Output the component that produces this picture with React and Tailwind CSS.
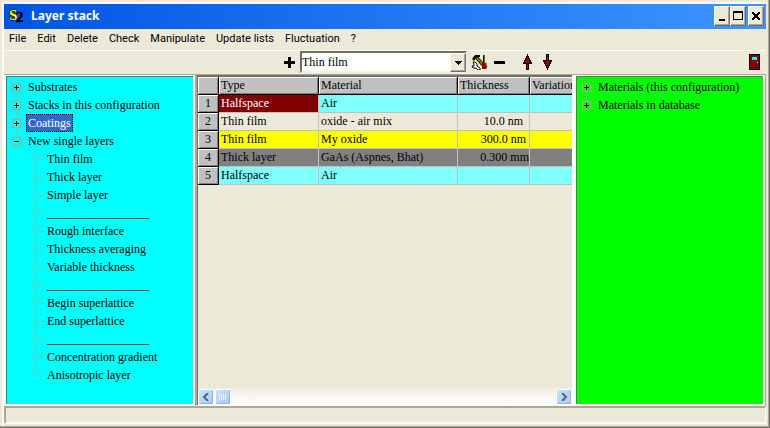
import React, { useState } from "react";

const MENU = [
    "File",
    "Edit",
    "Delete",
    "Check",
    "Manipulate",
    "Update lists",
    "Fluctuation",
    "?",
];

const SEPARATOR = "_________________";

const LAYER_TYPES = [
    "Thin film",
    "Thick layer",
    "Simple layer",
    SEPARATOR,
    "Rough interface",
    "Thickness averaging",
    "Variable thickness",
    SEPARATOR,
    "Begin superlattice",
    "End superlattice",
    SEPARATOR,
    "Concentration gradient",
    "Anisotropic layer",
];

const SOURCES = [
    { label: "Substrates" },
    { label: "Stacks in this configuration" },
    { label: "Coatings" },
    { label: "New single layers", children: LAYER_TYPES },
];

const MATERIALS = [
    { label: "Materials (this configuration)" },
    { label: "Materials in database" },
];

const LAYERS = [
    { type: "Halfspace", material: "Air", thickness: "", color: "bg-[#80ffff]" },
    {
        type: "Thin film",
        material: "oxide - air mix",
        thickness: "10.0 nm",
        color: "bg-[#ece9d8]",
        pad: "pr-[6px]",
    },
    {
        type: "Thin film",
        material: "My oxide",
        thickness: "300.0 nm",
        color: "bg-[#ffff00]",
        pad: "pr-[3px]",
    },
    {
        type: "Thick layer",
        material: "GaAs (Aspnes, Bhat)",
        thickness: "0.300 mm",
        color: "bg-[#808080]",
        pad: "pr-0",
    },
    { type: "Halfspace", material: "Air", thickness: "", color: "bg-[#80ffff]" },
];

function Expander({ open, first, last }) {
    return (
        <svg width="18" height="18" shapeRendering="crispEdges" className="shrink-0">
            <g stroke="#c09c90" strokeDasharray="1 1" fill="none">
                {!first && <path d="M6.5 0V5" />}
                {!last && <path d="M6.5 14V18" />}
                <path d="M11 9.5H15" />
            </g>
            <rect x="2.5" y="5.5" width="8" height="8" fill="none" stroke="#c09c90" />
            <path d="M4 9.5H9" stroke="#000" />
            {!open && <path d="M6.5 7V12" stroke="#000" />}
        </svg>
    );
}

function Branch({ last }) {
    return (
        <svg width="36" height="18" shapeRendering="crispEdges" className="shrink-0">
            <g stroke="#c09c90" strokeDasharray="1 1" fill="none">
                <path d={last ? "M25.5 0V10" : "M25.5 0V18"} />
                <path d="M27 9.5H34" />
            </g>
        </svg>
    );
}

function Tree({ nodes, selected, onSelect }) {
    return (
        <ul className="pt-px pl-[3px]">
            {nodes.map((node, i) => (
                <li key={node.label}>
                    <div className="flex h-[18px]">
                        <Expander
                            open={!!node.children}
                            first={i === 0}
                            last={i === nodes.length - 1}
                        />
                        <button
                            onClick={() => onSelect && onSelect(node.label)}
                            className={
                                selected === node.label
                                    ? "-ml-[2px] border border-dotted border-black bg-[#316ac5] px-px leading-4 text-white"
                                    : "leading-[18px]"
                            }
                        >
                            {node.label}
                        </button>
                    </div>
                    {node.children && (
                        <ul>
                            {node.children.map((child, j) => (
                                <li key={j} className="flex h-[18px] leading-[18px]">
                                    <Branch last={j === node.children.length - 1} />
                                    <button className="ml-px">{child}</button>
                                </li>
                            ))}
                        </ul>
                    )}
                </li>
            ))}
        </ul>
    );
}

function TitleBar() {
    const button =
        "flex h-5 w-4 items-center justify-center border border-t-white border-l-white border-r-[#716f64] border-b-[#716f64] bg-[#ece9d8] shadow-[inset_-1px_-1px_0_#aca899]";
    return (
        <header className="flex h-[25px] items-center bg-linear-to-r from-[#0054e3] to-[#3d95ff] pr-[2px] pb-px pl-[5px]">
            <svg width="16" height="16" viewBox="0 0 16 16" className="mr-[6px]">
                <text
                    x="0"
                    y="12"
                    fontFamily="Liberation Serif, serif"
                    fontWeight="bold"
                    fontSize="15"
                    fill="#ffff00"
                    stroke="#000"
                    strokeWidth="1"
                    paintOrder="stroke"
                >
                    S
                </text>
                <text
                    x="7"
                    y="14"
                    fontFamily="Liberation Serif, serif"
                    fontWeight="bold"
                    fontSize="15"
                    fill="#000"
                    stroke="#000"
                    strokeWidth="0.5"
                >
                    2
                </text>
            </svg>
            <h1 className="flex-1 font-['Noto_Sans',sans-serif] text-[12px] leading-5 font-bold text-white">
                Layer stack
            </h1>
            <button aria-label="Minimize" className={button}>
                <svg width="12" height="12" shapeRendering="crispEdges">
                    <path d="M3 9H9V11H3Z" />
                </svg>
            </button>
            <button aria-label="Maximize" className={button}>
                <svg width="12" height="12" shapeRendering="crispEdges">
                    <path d="M1 1H11V10H1ZM2 3V9H10V3Z" fillRule="evenodd" />
                </svg>
            </button>
            <button aria-label="Close" className={button + " ml-[2px]"}>
                <svg width="12" height="12" shapeRendering="crispEdges">
                    <path d="M2 2H4V3H5V4H7V3H8V2H10V4H9V5H8V7H9V8H10V10H8V9H7V8H5V9H4V10H2V8H3V7H4V5H3V4H2Z" />
                </svg>
            </button>
        </header>
    );
}

function Toolbar() {
    return (
        <div className="flex h-[25px] items-center border-t border-b border-t-white border-b-[#aca899] pr-[6px] pb-px pl-[279px]">
            <button aria-label="Add layer" className="mr-[5px]">
                <svg width="12" height="12" shapeRendering="crispEdges" className="block">
                    <path d="M5 1H8V5H12V8H8V12H5V8H1V5H5Z" />
                </svg>
            </button>
            <div className="relative">
                <select
                    aria-label="Layer type"
                    defaultValue="Thin film"
                    className="block h-[22px] w-[167px] appearance-none border-2 border-t-[#716f64] border-r-[#f4f2e8] border-b-[#f4f2e8] border-l-[#716f64] bg-white text-[12px] leading-4 outline-none"
                >
                    <option>Thin film</option>
                    <option>Thick layer</option>
                    <option>Simple layer</option>
                </select>
                <span className="pointer-events-none absolute top-[2px] right-px flex h-[19px] w-4 items-center justify-center border border-t-white border-r-[#716f64] border-b-[#716f64] border-l-white bg-[#ece9d8] shadow-[inset_-1px_-1px_0_#aca899]">
                    <svg width="7" height="4" shapeRendering="crispEdges">
                        <path d="M0 0H7V1H6V2H5V3H4V4H3V3H2V2H1V1H0Z" />
                    </svg>
                </span>
            </div>
            <button aria-label="Edit layer" className="ml-1">
                <svg width="17" height="16" viewBox="0 0 17 16" className="block">
                    <path d="M5 3L15 14" stroke="#000" strokeWidth="3.4" />
                    <path d="M5 3L15 14" stroke="#808000" strokeWidth="2" />
                    <path d="M1 5L4 1H9V3L7 3L4 5L3 7Z" fill="#000" />
                    <path d="M1 5L3 7" stroke="#808000" strokeWidth="1" />
                    <path d="M2 8L4 8L6 10V12L9 14V16H7L5 14H2L1 12L3 12L3 10Z" fill="#fff" stroke="#000" />
                    <path d="M12 1H14V9H12Z" fill="#606060" />
                    <path d="M12.5 1V9" stroke="#000" strokeWidth="0.8" />
                    <path d="M11 9H15.5V15H11Z" fill="#b00000" />
                    <path d="M13 9V15" stroke="#600000" />
                </svg>
            </button>
            <button aria-label="Remove layer" className="ml-[6px]">
                <svg width="11" height="12" shapeRendering="crispEdges" className="block">
                    <path d="M0 5H11V8H0Z" />
                </svg>
            </button>
            <button aria-label="Move up" className="ml-[18px]">
                <svg width="9" height="16" viewBox="0 0 9 16" shapeRendering="crispEdges" className="block">
                    <path d="M4 0H5V2H6V4H7V6H8V8H9V10H6V16H3V10H0V8H1V6H2V4H3V2H4Z" />
                    <path d="M4 3H5V5H6V7H7V9H5V15H4V9H2V7H3V5H4Z" fill="#900000" />
                </svg>
            </button>
            <button aria-label="Move down" className="ml-[11px]">
                <svg width="9" height="16" viewBox="0 0 9 16" shapeRendering="crispEdges" className="block">
                    <path d="M3 0H6V6H9V8H8V10H7V12H6V14H5V16H4V14H3V12H2V10H1V8H0V6H3Z" />
                    <path d="M4 1H5V7H7V9H6V11H5V13H4V11H3V9H2V7H4Z" fill="#900000" />
                </svg>
            </button>
            <button aria-label="Close window" className="ml-auto">
                <svg width="11" height="16" shapeRendering="crispEdges" className="block">
                    <path d="M0 0H11V16H0Z" />
                    <path d="M1 1H10V15H1Z" fill="#800000" />
                    <path d="M3 3H8V6H3Z" fill="#00ffff" />
                    <path d="M8 8H9V9H8Z" fill="#ffff00" />
                </svg>
            </button>
        </div>
    );
}

function LayerTable() {
    const fixed =
        "border-r border-b border-black bg-[#c0c0c0] p-0 align-top font-normal shadow-[inset_1px_1px_0_#fff,inset_-1px_-1px_0_#808080]";
    const cell =
        "overflow-hidden border-r border-b border-[#c0c0c0] p-0 pl-[2px] align-top whitespace-nowrap";
    return (
        <table className="w-[446px] table-fixed border-separate border-spacing-0 leading-4">
            <colgroup>
                <col className="w-[21px]" />
                <col className="w-[100px]" />
                <col className="w-[139px]" />
                <col className="w-[72px]" />
                <col />
            </colgroup>
            <thead>
                <tr className="h-[18px] text-left">
                    <td className={fixed}></td>
                    <th className={fixed + " pl-[2px]"}>Type</th>
                    <th className={fixed + " pl-[2px]"}>Material</th>
                    <th className={fixed + " pl-[2px]"}>Thickness</th>
                    <th className={fixed + " pl-[2px]"}>Variation</th>
                </tr>
            </thead>
            <tbody>
                {LAYERS.map((layer, i) => (
                    <tr key={i} className={"h-[18px] " + layer.color}>
                        <th className={fixed + " text-center"}>{i + 1}</th>
                        <td className={i === 0 ? cell + " bg-[#800000] text-white" : cell}>
                            {layer.type}
                        </td>
                        <td className={cell}>{layer.material}</td>
                        <td className={cell + " text-right " + (layer.pad || "")}>
                            {layer.thickness}
                        </td>
                        <td className={cell}></td>
                    </tr>
                ))}
            </tbody>
        </table>
    );
}

function ScrollBar() {
    const button =
        "flex h-4 w-4 items-center justify-center rounded-[2px] border border-white bg-linear-to-br from-[#c4e4fc] to-[#aec8f0] shadow-[inset_-1px_-1px_0_#98b0e0]";
    return (
        <div className="flex h-[17px] items-center bg-linear-to-b from-[#eeede5] to-white">
            <button aria-label="Scroll left" className={button}>
                <svg width="8" height="8" fill="none" stroke="#4d6185" strokeWidth="2">
                    <path d="M6 0L2 4L6 8" />
                </svg>
            </button>
            <div className={button + " ml-px"}>
                <svg width="8" height="6" shapeRendering="crispEdges" stroke="#eef4fe">
                    <path d="M0.5 0V6M2.5 0V6M4.5 0V6M6.5 0V6" />
                </svg>
            </div>
            <button aria-label="Scroll right" className={button + " ml-auto"}>
                <svg width="8" height="8" fill="none" stroke="#4d6185" strokeWidth="2">
                    <path d="M2 0L6 4L2 8" />
                </svg>
            </button>
        </div>
    );
}

export default function App() {
    const [selected, setSelected] = useState("Coatings");

    return (
        <div className="flex min-h-screen flex-col border-r border-b border-[#716f64] bg-[#ece9d8] font-['Liberation_Serif',serif] text-[12px] text-black">
            <div className="flex flex-1 flex-col border-r border-b border-[#aca899] pt-[2px] pl-[2px]">
                <div className="flex flex-1 flex-col border-2 border-t-white border-r-[#ece9d8] border-b-[#ece9d8] border-l-white">
                    <TitleBar />
                    <nav className="flex h-[21px] items-center gap-[11px] pl-[5px] font-['Roboto',sans-serif] text-[11px]">
                        {MENU.map((item) => (
                            <button key={item}>{item}</button>
                        ))}
                    </nav>
                    <Toolbar />
                    <main className="grid flex-1 grid-cols-[191px_minmax(0,1fr)_193px]">
                        <section className="border-2 border-t border-white">
                            <div className="h-full border-t border-l border-[#716f64] bg-[#00ffff]">
                                <Tree nodes={SOURCES} selected={selected} onSelect={setSelected} />
                            </div>
                        </section>
                        <section className="border-r border-b border-l-2 border-r-white border-b-white border-l-[#aca899]">
                            <div className="flex h-full flex-col justify-between overflow-hidden border-t-2 border-l border-[#716f64]">
                                <LayerTable />
                                <ScrollBar />
                            </div>
                        </section>
                        <section className="border-r border-[#aca899]">
                            <div className="h-full border-t border-r-2 border-b-2 border-l-3 border-white">
                                <div className="h-full border-t border-l border-[#716f64] bg-[#00ff00]">
                                    <Tree nodes={MATERIALS} />
                                </div>
                            </div>
                        </section>
                    </main>
                    <footer className="h-[18px] border-t-2 border-r border-b-2 border-l-2 border-t-[#aca899] border-r-white border-b-white border-l-[#aca899]" />
                </div>
            </div>
        </div>
    );
}
